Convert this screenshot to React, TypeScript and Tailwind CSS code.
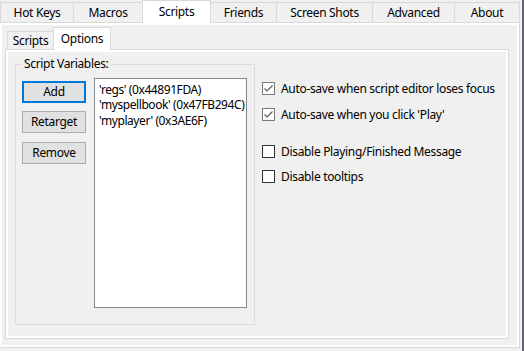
import React from "react";

const font = { fontFamily: '"Noto Sans", "Open Sans", sans-serif' };

function Tab({ label, w, selected, first }: { label: string; w: string; selected?: boolean; first?: boolean }) {
  if (selected) {
    return (
      <div className={`${w} ${first ? "" : "-ml-px"} h-[23px] mb-[-1px] relative z-10 bg-white border-t border-l border-r border-[#d9d9d9] flex items-center justify-center pb-[1px]`}>
        {label}
      </div>
    );
  }
  return (
    <div className={`${w} ${first ? "" : "-ml-px"} h-[20px] bg-[#f0f0f0] border-t border-l border-r border-[#d9d9d9] flex items-center justify-center pt-[1px]`}>
      {label}
    </div>
  );
}

function Check({ checked, label, className }: { checked?: boolean; label: string; className?: string }) {
  return (
    <div className={`flex items-center h-[13px] ${className ?? ""}`}>
      <div className={`w-[13px] h-[13px] bg-white border ${checked ? "border-[#7a7a7a]" : "border-[#333333]"} flex items-center justify-center shrink-0`}>
        {checked && (
          <svg width="11" height="11" viewBox="0 0 11 11">
            <path d="M1.5 5.5 L4 8 L9.5 2.5" fill="none" stroke="#5a5a5a" strokeWidth="1.2" />
          </svg>
        )}
      </div>
      <span className="ml-[6px] whitespace-nowrap leading-[16px]">{label}</span>
    </div>
  );
}

function Btn({ label, focused, className }: { label: string; focused?: boolean; className?: string }) {
  return (
    <div
      className={`w-[64px] h-[22px] bg-[#e1e1e1] flex items-center justify-center ${
        focused ? "border-2 border-[#0078d7]" : "border border-[#adadad]"
      } ${className ?? ""}`}
    >
      {label}
    </div>
  );
}

export default function App() {
  return (
    <div className="w-[524px] h-[351px] bg-[#f0f0f0] overflow-hidden flex text-[12px] tracking-[-0.32px] text-black" style={font}>
      <div className="w-[520px] flex flex-col">
        <div className="h-[22px] flex items-end">
          <Tab label="Hot Keys" w="w-[74px]" first />
          <Tab label="Macros" w="w-[70px]" />
          <Tab label="Scripts" w="w-[69px]" selected />
          <Tab label="Friends" w="w-[67px]" />
          <Tab label="Screen Shots" w="w-[97px]" />
          <Tab label="Advanced" w="w-[83px]" />
          <Tab label="About" w="w-[66px]" />
        </div>
        <div className="ml-[-1px] w-[521px] h-[326px] border border-[#d9d9d9] bg-white p-[2px]">
          <div className="w-full h-full bg-[#f0f0f0] pl-[3px] pt-[2px]">
            <div className="h-[22px] flex items-end">
              <div className="ml-[2px] w-[47px] h-[18px] bg-[#f0f0f0] border-t border-l border-r border-[#d9d9d9] flex items-center justify-center pt-[1px]">
                Scripts
              </div>
              <div className="-ml-px w-[58px] h-[23px] mb-[-1px] relative z-10 bg-white border-t border-l border-r border-[#d9d9d9] flex items-center justify-center pb-[1px]">
                Options
              </div>
            </div>
            <div className="w-[504px] h-[290px] border border-[#d9d9d9] bg-white p-[2px]">
              <div className="w-full h-full bg-[#f0f0f0] flex items-start">
                <div className="relative ml-[7px] mt-[12px] w-[240px] h-[261px] border border-[#dcdcdc] flex items-start">
                  <div className="absolute left-[6px] top-[-9px] px-[2px] bg-[#f0f0f0] leading-[16px]">Script Variables:</div>
                  <div className="ml-[6px] mt-[16px] flex flex-col">
                    <Btn label="Add" focused />
                    <Btn label="Retarget" className="mt-[8px]" />
                    <Btn label="Remove" className="mt-[9px]" />
                  </div>
                  <div className="ml-[8px] mt-[13px] w-[153px] h-[230px] border border-[#828790] bg-white pl-[4px] pt-[3px] leading-[15.4px] tracking-[-0.42px] whitespace-nowrap overflow-hidden">
                    <div>'regs' (0x44891FDA)</div>
                    <div>'myspellbook' (0x47FB294C)</div>
                    <div>'myplayer' (0x3AE6F)</div>
                  </div>
                </div>
                <div className="ml-[7px] mt-[30px] flex flex-col">
                  <Check checked label="Auto-save when script editor loses focus" />
                  <Check checked label="Auto-save when you click 'Play'" className="mt-[13px]" />
                  <Check label="Disable Playing/Finished Message" className="mt-[24px]" />
                  <Check label="Disable tooltips" className="mt-[12px]" />
                </div>
              </div>
            </div>
          </div>
        </div>
      </div>
      <div className="w-[2px]" />
      <div className="w-[2px] h-full bg-[#63676d]" />
    </div>
  );
}
